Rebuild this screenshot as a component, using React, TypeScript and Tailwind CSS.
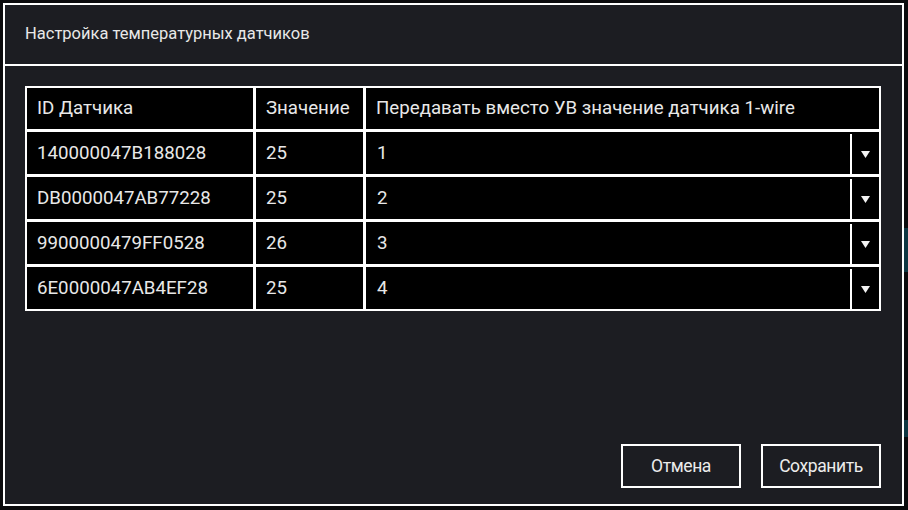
const rows = [
  { id: "140000047B188028", value: "25", wire: "1" },
  { id: "DB0000047AB77228", value: "25", wire: "2" },
  { id: "9900000479FF0528", value: "26", wire: "3" },
  { id: "6E0000047AB4EF28", value: "25", wire: "4" },
]

function SelectCell({ value }: { value: string }) {
  return (
    <div className="flex h-full bg-black">
      <div className="flex flex-1 items-center pl-[11px]">{value}</div>
      <div className="flex w-[29px] items-center justify-center border-l-2 border-white mt-[2px]">
        <svg width="9" height="7" viewBox="0 0 9 7">
          <path d="M0 0H9L4.5 7Z" fill="#f2f2f2" />
        </svg>
      </div>
    </div>
  )
}

export default function App() {
  return (
    <div
      className="flex w-[908px] h-[510px] overflow-hidden bg-[#0b0b0d] pl-[3px] pt-[3px]"
      style={{ fontFamily: "Roboto, 'Noto Sans', sans-serif" }}
    >
      <div className="flex flex-col w-[901px] h-[503px] shrink-0 border-2 border-white bg-[#1c1d22] text-[#e8e8e8]">
        <div className="flex h-[61px] shrink-0 items-center border-b-2 border-white pl-[20px] text-[16.5px]">
          Настройка температурных датчиков
        </div>

        <div className="flex flex-1 flex-col pl-[20px] pr-[21px] pt-[20px] pb-[16px]">
          <div className="grid grid-cols-[226px_107px_1fr] gap-[3px] bg-white p-[2px] text-[18.7px]">
            <div className="flex h-[41px] items-center bg-black pl-[10px]">ID Датчика</div>
            <div className="flex h-[41px] items-center bg-black pl-[10px]">Значение</div>
            <div className="flex h-[41px] items-center bg-black pl-[10px]">
              Передавать вместо УВ значение датчика 1-wire
            </div>
            {rows.map((r) => (
              <>
                <div key={r.id + "a"} className="flex h-[42px] items-center bg-black pl-[10px]">
                  {r.id}
                </div>
                <div key={r.id + "b"} className="flex h-[42px] items-center bg-black pl-[10px]">
                  {r.value}
                </div>
                <div key={r.id + "c"} className="h-[42px]">
                  <SelectCell value={r.wire} />
                </div>
              </>
            ))}
          </div>

          <div className="flex-1" />

          <div className="flex justify-end gap-[20px] text-[17.5px]">
            <button className="h-[44px] w-[120px] border-2 border-white text-[#ececec] tracking-[-0.4px]">
              Отмена
            </button>
            <button className="h-[44px] w-[120px] border-2 border-white text-[#ececec] tracking-[-0.4px]">
              Сохранить
            </button>
          </div>
        </div>
      </div>

      {/* edge of the page behind the dialog */}
      <div className="flex flex-1 flex-col">
        <div className="h-[225px]" />
        <div className="h-[44px] bg-[#0e3642]" />
        <div className="h-[148px]" />
        <div className="h-[17px] bg-[#0e3642]" />
      </div>
    </div>
  )
}
